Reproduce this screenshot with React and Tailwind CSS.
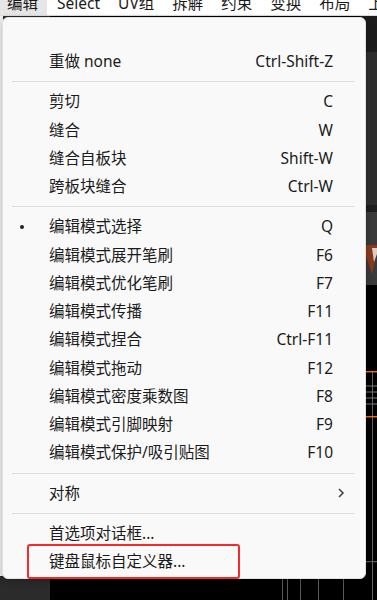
import React from "react";

const FONT = { fontFamily: '"Noto Sans", "Noto Sans CJK SC", sans-serif' };

const sections = [
  [["重做 none", "Ctrl-Shift-Z"]],
  [
    ["剪切", "C"],
    ["缝合", "W"],
    ["缝合自板块", "Shift-W"],
    ["跨板块缝合", "Ctrl-W"],
  ],
  [
    ["编辑模式选择", "Q", "bullet"],
    ["编辑模式展开笔刷", "F6"],
    ["编辑模式优化笔刷", "F7"],
    ["编辑模式传播", "F11"],
    ["编辑模式捏合", "Ctrl-F11"],
    ["编辑模式拖动", "F12"],
    ["编辑模式密度乘数图", "F8"],
    ["编辑模式引脚映射", "F9"],
    ["编辑模式保护/吸引贴图", "F10"],
  ],
  [["对称", "", "sub"]],
  [
    ["首选项对话框...", ""],
    ["键盘鼠标自定义器...", "", "boxed"],
  ],
];

function Row({ label, shortcut, kind }) {
  return (
    <div className="relative flex h-[28.25px] items-center pl-[46px] pr-[32px] text-[15.5px] text-[#1b1b1b]">
      {kind === "bullet" && (
        <span className="absolute left-[17px] top-1/2 h-[4px] w-[4px] -translate-y-1/2 rounded-full bg-[#222]" />
      )}
      <span className="flex-1 whitespace-nowrap">{label}</span>
      {shortcut && <span className="whitespace-nowrap">{shortcut}</span>}
      {kind === "sub" && (
        <svg className="absolute right-[20px] top-1/2 -translate-y-1/2" width="8" height="12" viewBox="0 0 8 12">
          <path d="M2 2 L6 6 L2 10" fill="none" stroke="#444" strokeWidth="1.6" />
        </svg>
      )}
      {kind === "boxed" && (
        <span className="pointer-events-none absolute left-[24px] top-[-3.5px] h-[35px] w-[213px] rounded-[3px] border-[2.5px] border-[#f52a2a]" />
      )}
    </div>
  );
}

function Viewport() {
  const vlines = [282, 287, 300, 318, 343];
  return (
    <svg width="377" height="584" viewBox="0 0 377 584" className="block">
      <rect x="0" y="0" width="377" height="584" fill="#000" />
      <rect x="0" y="0" width="50" height="584" fill="#2b2b2b" />
      <rect x="0" y="0" width="3" height="560" fill="#f0f0f0" />
      <rect x="360" y="0" width="17" height="36" fill="#1c1c1c" />
      <rect x="360" y="36" width="17" height="153" fill="#2d2d2d" />
      <rect x="360" y="189" width="17" height="7" fill="#1e1e1e" />
      <rect x="360" y="196" width="17" height="73" fill="#3a3a3a" />
      <polygon points="366,229 377,229 377,236 372,258 366,240" fill="#8a3a1c" />
      <polygon points="372,232 377,232 377,238 374,246" fill="#d8d0c8" />
      <line x1="372.5" y1="355" x2="372.5" y2="584" stroke="#666" strokeWidth="1" />
      <line x1="360" y1="355.7" x2="377" y2="355.7" stroke="#e0701e" strokeWidth="1.5" />
      {[370, 376, 382, 388].map((y) => (
        <line key={y} x1="366" y1={y} x2="377" y2={y} stroke="#7a7a7a" strokeWidth="1" />
      ))}
      <line x1="360" y1="400.7" x2="377" y2="400.7" stroke="#e0701e" strokeWidth="1.5" />
      <line x1="360" y1="545.7" x2="377" y2="545.7" stroke="#6a6a6a" strokeWidth="1" />
      {vlines.map((x) => (
        <line key={x} x1={x + 0.5} y1="300" x2={x + 0.5} y2="584" stroke="#5a5a5a" strokeWidth="1" />
      ))}
      <rect x="50" y="0" width="4" height="584" fill="#000" />
    </svg>
  );
}

export default function App() {
  return (
    <div className="relative h-[600px] w-[377px] overflow-hidden bg-black" style={FONT}>
      <div className="flex h-[16px] overflow-hidden border-b border-[#dcdcdc] bg-white text-[15.5px] leading-[15px] text-[#1b1b1b]">
        <div className="h-[15px] bg-[#e6e6e6] pl-[7px] pr-[9px]">
          <span className="relative top-[-4px] whitespace-nowrap">编辑</span>
        </div>
        <div className="flex h-[15px] gap-[18px] pl-[10px]">
          <span className="relative top-[-4px] whitespace-nowrap">Select</span>
          <span className="relative top-[-4px] whitespace-nowrap">UV组</span>
          <span className="relative top-[-4px] whitespace-nowrap">拆解</span>
          <span className="relative top-[-4px] whitespace-nowrap">约束</span>
          <span className="relative top-[-4px] whitespace-nowrap">变换</span>
          <span className="relative top-[-4px] whitespace-nowrap">布局</span>
          <span className="relative top-[-4px] whitespace-nowrap">上</span>
        </div>
      </div>
      <Viewport />
      <div className="absolute left-[2px] top-[17px] w-[364px] rounded-[6px] border border-[#e2e2e2] bg-[#f9f9f9] pb-[2.5px] pt-[29.5px] shadow-[0_2px_6px_rgba(0,0,0,0.25)]">
        {sections.map((sec, si) => (
          <React.Fragment key={si}>
            {si > 0 && (
              <div className="flex h-[12px] items-center pl-[9px] pr-[11px]">
                <div className="h-px w-full bg-[#dedede]" />
              </div>
            )}
            {sec.map(([l, s, k], ri) => (
              <Row key={ri} label={l} shortcut={s} kind={k} />
            ))}
          </React.Fragment>
        ))}
      </div>
    </div>
  );
}
